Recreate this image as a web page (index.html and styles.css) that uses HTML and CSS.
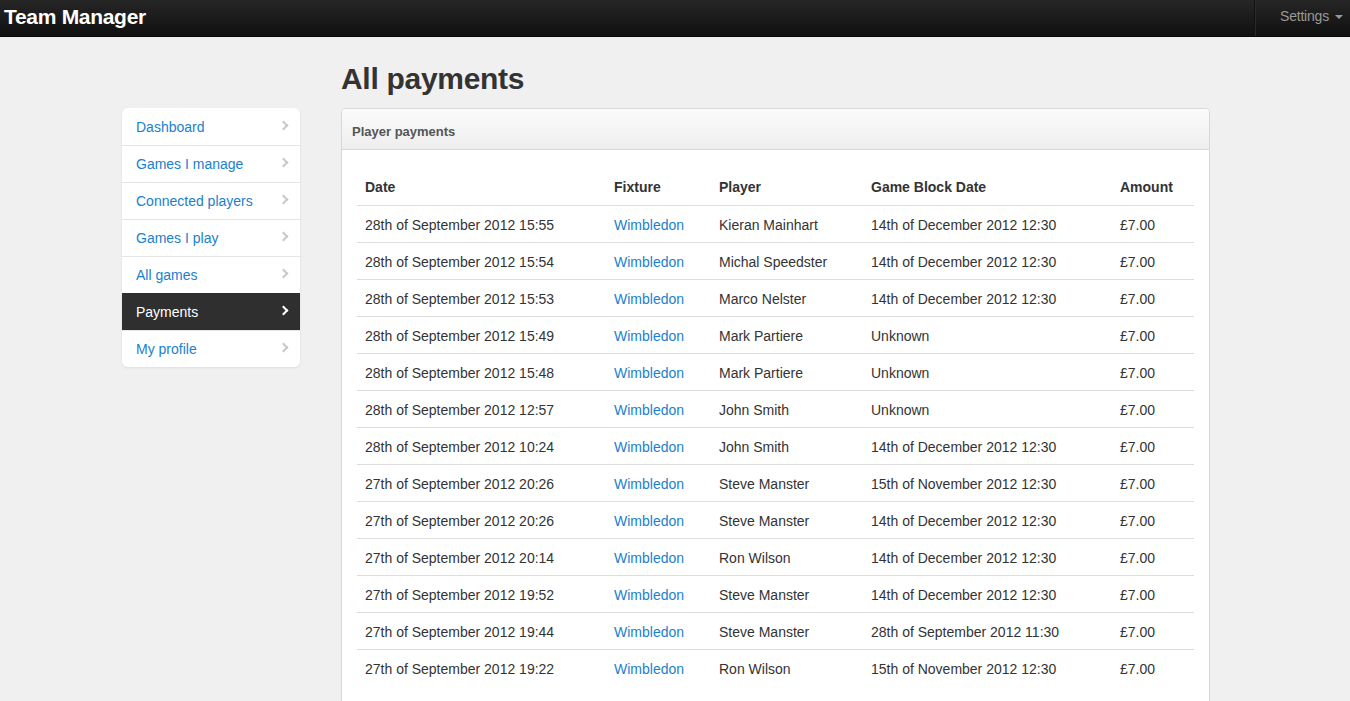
FILE: index.html
```html
<!DOCTYPE html>
<html>
<head>
<meta charset="utf-8">
<link rel="stylesheet" href="styles.css">
</head>
<body>
<header class="navbar">
  <a class="brand">Team Manager</a>
  <div class="nav-right">
    <span class="divider"></span>
    <a class="settings">Settings <span class="caret"></span></a>
  </div>
</header>
<div class="container">
  <aside class="sidebar">
    <ul class="nav-list">
      <li><a>Dashboard<span class="chev"></span></a></li>
      <li><a>Games I manage<span class="chev"></span></a></li>
      <li><a>Connected players<span class="chev"></span></a></li>
      <li><a>Games I play<span class="chev"></span></a></li>
      <li><a>All games<span class="chev"></span></a></li>
      <li class="active"><a>Payments<span class="chev"></span></a></li>
      <li><a>My profile<span class="chev"></span></a></li>
    </ul>
  </aside>
  <main class="main">
    <h1>All payments</h1>
    <section class="panel">
      <div class="panel-head">Player payments</div>
      <div class="panel-body">
        <table>
          <colgroup>
            <col class="c1"><col class="c2"><col class="c3"><col class="c4"><col class="c5">
          </colgroup>
          <thead>
            <tr><th>Date</th><th>Fixture</th><th>Player</th><th>Game Block Date</th><th>Amount</th></tr>
          </thead>
          <tbody>
            <tr><td>28th of September 2012 15:55</td><td><a>Wimbledon</a></td><td>Kieran Mainhart</td><td>14th of December 2012 12:30</td><td>£7.00</td></tr>
            <tr><td>28th of September 2012 15:54</td><td><a>Wimbledon</a></td><td>Michal Speedster</td><td>14th of December 2012 12:30</td><td>£7.00</td></tr>
            <tr><td>28th of September 2012 15:53</td><td><a>Wimbledon</a></td><td>Marco Nelster</td><td>14th of December 2012 12:30</td><td>£7.00</td></tr>
            <tr><td>28th of September 2012 15:49</td><td><a>Wimbledon</a></td><td>Mark Partiere</td><td>Unknown</td><td>£7.00</td></tr>
            <tr><td>28th of September 2012 15:48</td><td><a>Wimbledon</a></td><td>Mark Partiere</td><td>Unknown</td><td>£7.00</td></tr>
            <tr><td>28th of September 2012 12:57</td><td><a>Wimbledon</a></td><td>John Smith</td><td>Unknown</td><td>£7.00</td></tr>
            <tr><td>28th of September 2012 10:24</td><td><a>Wimbledon</a></td><td>John Smith</td><td>14th of December 2012 12:30</td><td>£7.00</td></tr>
            <tr><td>27th of September 2012 20:26</td><td><a>Wimbledon</a></td><td>Steve Manster</td><td>15th of November 2012 12:30</td><td>£7.00</td></tr>
            <tr><td>27th of September 2012 20:26</td><td><a>Wimbledon</a></td><td>Steve Manster</td><td>14th of December 2012 12:30</td><td>£7.00</td></tr>
            <tr><td>27th of September 2012 20:14</td><td><a>Wimbledon</a></td><td>Ron Wilson</td><td>14th of December 2012 12:30</td><td>£7.00</td></tr>
            <tr><td>27th of September 2012 19:52</td><td><a>Wimbledon</a></td><td>Steve Manster</td><td>14th of December 2012 12:30</td><td>£7.00</td></tr>
            <tr><td>27th of September 2012 19:44</td><td><a>Wimbledon</a></td><td>Steve Manster</td><td>28th of September 2012 11:30</td><td>£7.00</td></tr>
            <tr><td>27th of September 2012 19:22</td><td><a>Wimbledon</a></td><td>Ron Wilson</td><td>15th of November 2012 12:30</td><td>£7.00</td></tr>
          </tbody>
        </table>
      </div>
    </section>
  </main>
</div>
</body>
</html>
```

FILE: styles.css
```css
* { box-sizing: border-box; }
html, body { margin: 0; padding: 0; }
body {
  background: #f0f0f0;
  font-family: "Liberation Sans", Arial, Helvetica, sans-serif;
  font-size: 14px;
  color: #333;
  height: 701px;
  overflow: hidden;
}
a { color: #1a80cf; text-decoration: none; }

.navbar {
  height: 37px;
  background: linear-gradient(#262626, #101010);
  border-bottom: 1px solid #080808;
  display: flex;
  align-items: center;
  justify-content: space-between;
}
.brand {
  color: #fff;
  font-weight: bold;
  font-size: 21px;
  letter-spacing: -0.3px;
  padding-left: 4px;
  margin-top: -2px;
}
.nav-right { display: flex; align-items: stretch; height: 100%; }
.divider {
  width: 2px;
  border-left: 1px solid #111;
  border-right: 1px solid #2a2a2a;
}
.settings {
  color: #999;
  font-size: 14px;
  display: flex;
  align-items: center;
  padding: 0 7px 0 24px;
  margin-top: -4px;
  letter-spacing: -0.2px;
}
.caret {
  display: inline-block;
  width: 0; height: 0;
  border-left: 4px solid transparent;
  border-right: 4px solid transparent;
  border-top: 4px solid #999;
  margin-left: 6px;
  margin-top: 1px;
}

.container {
  display: flex;
  align-items: flex-start;
  padding-left: 122px;
}
.sidebar {
  width: 178px;
  margin-top: 71px;
  margin-right: 41px;
}
.nav-list {
  list-style: none;
  margin: 0;
  padding: 0;
  background: #fff;
  border-radius: 6px;
  box-shadow: 0 1px 3px rgba(0,0,0,0.08);
  overflow: hidden;
}
.nav-list li a {
  display: flex;
  justify-content: space-between;
  align-items: center;
  height: 37px;
  padding: 0 10px 0 14px;
  border-top: 1px solid #e5e5e5;
  color: #1a80cf;
}
.nav-list li:first-child a { border-top-color: transparent; }
.nav-list li.active a {
  background: #2f2f2f;
  color: #fff;
  border-top-color: #2f2f2f;
}
.chev {
  width: 7px; height: 7px;
  border-right: 2.5px solid #c8c8c8;
  border-top: 2.5px solid #c8c8c8;
  transform: rotate(45deg);
  margin-right: 3px;
  margin-top: -3px;
}
.nav-list li.active .chev { border-color: #fff; }

.main { width: 869px; }
h1 {
  font-size: 30px;
  font-weight: bold;
  margin: 0;
  height: 71px;
  line-height: 84px;
  letter-spacing: -0.3px;
  color: #333;
}
.panel {
  background: #fff;
  border: 1px solid #d8d8d8;
  border-radius: 4px 4px 0 0;
}
.panel-head {
  height: 41px;
  line-height: 45px;
  padding-left: 10px;
  font-size: 13px;
  font-weight: bold;
  color: #555;
  background: linear-gradient(#fbfbfb, #eeeeee);
  border-bottom: 1px solid #d8d8d8;
  border-radius: 4px 4px 0 0;
}
.panel-body { padding: 18px 15px 40px 15px; }
table {
  width: 837px;
  border-collapse: collapse;
  table-layout: fixed;
}
col.c1 { width: 249px; }
col.c2 { width: 105px; }
col.c3 { width: 152px; }
col.c4 { width: 249px; }
col.c5 { width: 82px; }
th, td {
  text-align: left;
  padding: 0 8px;
  height: 37px;
  white-space: nowrap;
}
th { font-weight: bold; padding-top: 1px; }
td { border-top: 1px solid #ddd; padding-top: 3px; }
```
